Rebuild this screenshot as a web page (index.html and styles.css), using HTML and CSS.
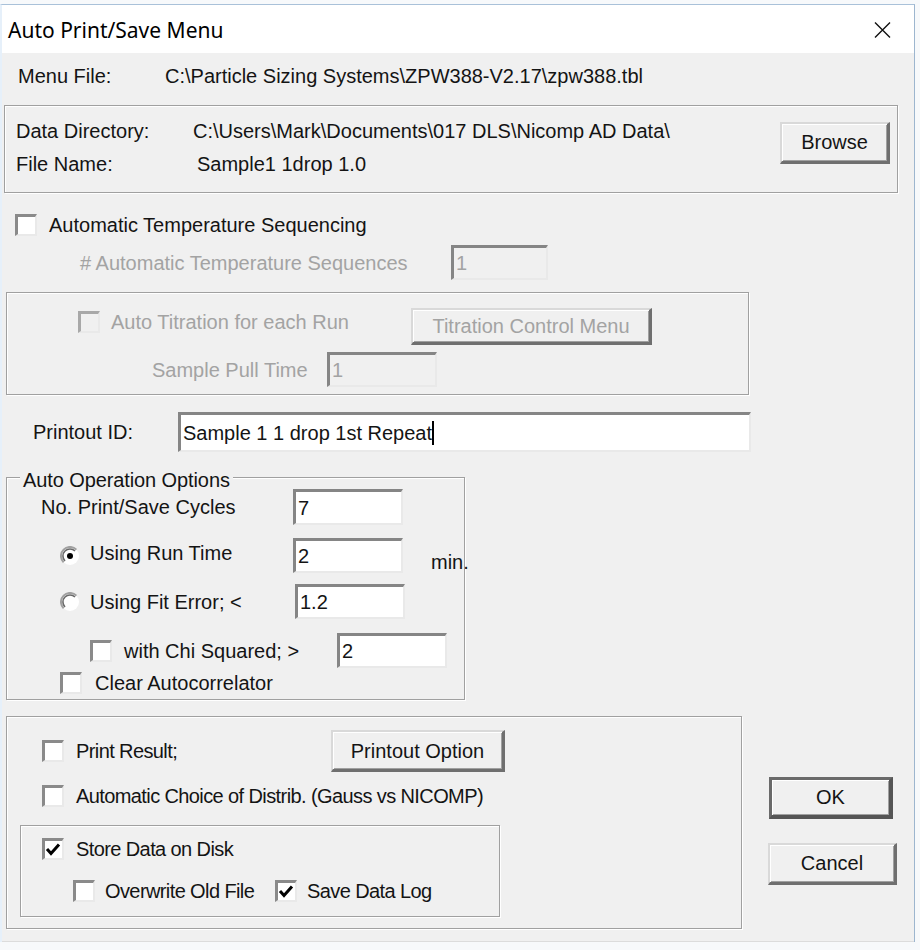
FILE: index.html
```html
<!DOCTYPE html>
<html lang="en">
    <head>
        <meta charset="UTF-8">
        <meta name="viewport" content="width=device-width, initial-scale=1.0">
        <title>Auto Print/Save Menu</title>
        <link rel="stylesheet" href="styles.css">
    </head>
    <body>
        <div class="window">
            <div class="title-bar">
                <span class="title">Auto Print/Save Menu</span>
                <svg class="close" width="17" height="16" viewBox="0 0 17 16">
                    <path d="M1 0.5 L16 15.5 M16 0.5 L1 15.5" stroke="#111" stroke-width="1.4" fill="none" />
                </svg>
            </div>

            <div class="client">
                <div class="row menu-row">
                    <span class="menu-label">Menu File:</span>
                    <span>C:\Particle Sizing Systems\ZPW388-V2.17\zpw388.tbl</span>
                </div>

                <div class="group data-group">
                    <div class="data-rows">
                        <div class="row">
                            <span class="data-label">Data Directory:</span>
                            <span>C:\Users\Mark\Documents\017 DLS\Nicomp AD Data\</span>
                        </div>
                        <div class="row">
                            <span class="data-label">File Name:</span>
                            <span class="file-value">Sample1 1drop 1.0</span>
                        </div>
                    </div>
                    <button class="btn browse-btn">Browse</button>
                </div>

                <div class="row temp-row">
                    <span class="check"></span>
                    <span class="check-label">Automatic Temperature Sequencing</span>
                </div>

                <div class="row seq-row disabled">
                    <span class="seq-label"># Automatic Temperature Sequences</span>
                    <div class="edit edit-off seq-edit">1</div>
                </div>

                <div class="group titration-group disabled">
                    <div class="titration-row">
                        <span class="check check-off titration-check"></span>
                        <span class="titration-label">Auto Titration for each Run</span>
                        <button class="btn titration-btn">Titration Control Menu</button>
                    </div>
                    <div class="row pull-row">
                        <span class="pull-label">Sample Pull Time</span>
                        <div class="edit edit-off pull-edit">1</div>
                    </div>
                </div>

                <div class="row printout-row">
                    <span class="printout-label">Printout ID:</span>
                    <div class="edit printout-edit">Sample 1 1 drop 1st Repeat<span class="caret"></span></div>
                </div>

                <div class="group options-group">
                    <span class="legend">Auto Operation Options</span>

                    <div class="row cycles-row">
                        <span class="cycles-label">No. Print/Save Cycles</span>
                        <div class="edit small-edit">7</div>
                    </div>

                    <div class="row runtime-row">
                        <svg class="radio" width="20" height="20" viewBox="0 0 20 20">
                            <circle cx="10" cy="10" r="9" fill="#fff" />
                            <path d="M3.6 16.4 A9 9 0 0 1 16.4 3.6" stroke="#a0a0a0" stroke-width="2" fill="none" />
                            <path d="M5 15 A7 7 0 0 1 15 5" stroke="#6a6a6a" stroke-width="1.6" fill="none" />
                            <circle cx="10" cy="10" r="3" fill="#000" />
                        </svg>
                        <span class="radio-label runtime-label">Using Run Time</span>
                        <div class="edit small-edit">2</div>
                        <span class="unit">min.</span>
                    </div>

                    <div class="row fit-row">
                        <svg class="radio" width="20" height="20" viewBox="0 0 20 20">
                            <circle cx="10" cy="10" r="9" fill="#fff" />
                            <path d="M3.6 16.4 A9 9 0 0 1 16.4 3.6" stroke="#a0a0a0" stroke-width="2" fill="none" />
                            <path d="M5 15 A7 7 0 0 1 15 5" stroke="#6a6a6a" stroke-width="1.6" fill="none" />
                        </svg>
                        <span class="radio-label fit-label">Using Fit Error; &lt;</span>
                        <div class="edit small-edit">1.2</div>
                    </div>

                    <div class="row chi-row">
                        <span class="check"></span>
                        <span class="chi-label">with Chi Squared; &gt;</span>
                        <div class="edit small-edit">2</div>
                    </div>

                    <div class="row clear-row">
                        <span class="check"></span>
                        <span class="clear-label">Clear Autocorrelator</span>
                    </div>
                </div>

                <div class="bottom">
                    <div class="group output-group">
                        <div class="row print-row">
                            <span class="check"></span>
                            <span class="print-label narrow">Print Result;</span>
                            <button class="btn printout-btn">Printout Option</button>
                        </div>
                        <div class="row distrib-row">
                            <span class="check"></span>
                            <span class="check-label narrow">Automatic Choice of Distrib. (Gauss vs NICOMP)</span>
                        </div>

                        <div class="group disk-group">
                            <div class="row store-row">
                                <span class="check checked">
                                    <svg width="17" height="17" viewBox="0 0 17 17"><polyline points="2,8 6,12.5 14,3.5" stroke="#000" stroke-width="3" fill="none" /></svg>
                                </span>
                                <span class="check-label narrow">Store Data on Disk</span>
                            </div>
                            <div class="row overwrite-row">
                                <span class="check"></span>
                                <span class="overwrite-label narrow">Overwrite Old File</span>
                                <span class="check checked">
                                    <svg width="17" height="17" viewBox="0 0 17 17"><polyline points="2,8 6,12.5 14,3.5" stroke="#000" stroke-width="3" fill="none" /></svg>
                                </span>
                                <span class="log-label narrow">Save Data Log</span>
                            </div>
                        </div>
                    </div>

                    <div class="dialog-buttons">
                        <button class="btn btn-default ok-btn">OK</button>
                        <button class="btn cancel-btn">Cancel</button>
                    </div>
                </div>
            </div>
        </div>
    </body>
</html>
```

FILE: styles.css
```css
* {
    box-sizing: border-box;
}

body {
    margin: 0;
    padding: 0;
    background-color: #f7f9fb;
    font-family: "Liberation Sans", Arial, sans-serif;
    font-size: 20px;
    color: #141414;
}

.window {
    margin-top: 4px;
    width: 915px;
    border-top: 1px solid #a9c1d9;
    border-right: 1px solid #9db6cf;
    border-left: 2px solid #e6f0fa;
    background-color: #fff;
}

.title-bar {
    height: 48px;
    display: flex;
    align-items: center;
    justify-content: space-between;
    padding: 0 23px 0 6px;
    background-color: #fff;
}

.title {
    font-family: "Noto Sans", "Open Sans", sans-serif;
    font-size: 21px;
    color: #000;
    margin-top: 1px;
}

.close {
    display: block;
    margin-top: 2px;
}

.client {
    height: 889px;
    background-color: #f0f0f0;
    border-bottom: 1px solid #dcdcdc;
    overflow: hidden;
}

.row {
    display: flex;
    align-items: center;
    line-height: 26px;
    white-space: nowrap;
}

.row > span {
    flex: none;
}

.narrow {
    letter-spacing: -0.6px;
}

.disabled {
    color: #a3a3a3;
}

/* etched group frame */
.group {
    position: relative;
    border: 1px solid #a0a0a0;
    box-shadow: inset 1px 1px 0 #fff, 1px 1px 0 #fff;
}

.legend {
    position: absolute;
    top: -11px;
    left: 13px;
    padding: 0 3px;
    line-height: 26px;
    background-color: #f0f0f0;
    white-space: nowrap;
    letter-spacing: -0.1px;
}

/* sunken edit box */
.edit {
    display: flex;
    align-items: center;
    padding-left: 2px;
    background-color: #fff;
    border-style: solid;
    border-width: 3px 2px 2px 3px;
    border-color: #858585 #e9e9e9 #e9e9e9 #858585;
    white-space: nowrap;
    flex: none;
}

.edit-off {
    background-color: #f0f0f0;
    color: #a3a3a3;
}

.caret {
    display: inline-block;
    width: 2px;
    height: 24px;
    background-color: #000;
}

.check {
    display: flex;
    align-items: center;
    justify-content: center;
    width: 22px;
    height: 22px;
    flex: none;
    background-color: #fff;
    border-style: solid;
    border-width: 3px 2px 2px 3px;
    border-color: #8a8a8a #e9e9e9 #e9e9e9 #8a8a8a;
}

.check-off {
    background-color: #f0f0f0;
    border-color: #a8a8a8 #e9e9e9 #e9e9e9 #a8a8a8;
}

.check svg {
    display: block;
    flex: none;
}

.check-label {
    margin-left: 12px;
}

.radio {
    display: block;
    flex: none;
}

/* raised push button */
.btn {
    display: flex;
    align-items: center;
    justify-content: center;
    padding: 0;
    font: inherit;
    color: #141414;
    background-color: #f0f0f0;
    border-style: solid;
    border-width: 2px 3px 3px 2px;
    border-color: #d9d9d9 #6f6f6f #6f6f6f #d9d9d9;
    box-shadow: inset 1px 1px 0 #fff, inset -1px -1px 0 #a0a0a0;
    flex: none;
}

.disabled .btn {
    color: #a3a3a3;
}

.btn-default {
    border-width: 3px 4px 4px 3px;
    border-color: #6a6a6a #555 #555 #6a6a6a;
    box-shadow: inset 1px 1px 0 #fff, inset -1px -1px 0 #a0a0a0;
}

/* menu file line */
.menu-row {
    height: 26px;
    margin-top: 10px;
    padding-left: 16px;
}

.menu-label {
    width: 147px;
}

/* data directory frame */
.data-group {
    display: flex;
    align-items: flex-start;
    justify-content: space-between;
    width: 894px;
    height: 88px;
    margin: 16px 0 0 2px;
    padding: 12px 7px 0 11px;
}

.data-rows {
    display: flex;
    flex-direction: column;
    gap: 7px;
}

.data-label {
    width: 177px;
}

.file-value {
    padding-left: 4px;
}

.browse-btn {
    width: 110px;
    height: 42px;
    margin-top: 4px;
}

/* temperature sequencing */
.temp-row {
    height: 26px;
    margin-top: 19px;
    padding-left: 13px;
}

.seq-row {
    height: 35px;
    margin-top: 7px;
    padding-left: 78px;
}

.seq-label {
    width: 371px;
}

.seq-edit {
    width: 97px;
    height: 35px;
}

/* titration frame */
.titration-group {
    width: 743px;
    height: 103px;
    margin: 12px 0 0 4px;
    padding-top: 15px;
}

.titration-row {
    display: flex;
    align-items: flex-start;
    height: 37px;
    line-height: 26px;
    white-space: nowrap;
}

.titration-check {
    margin: 3px 0 0 71px;
}

.titration-label {
    width: 300px;
    margin: 1px 0 0 11px;
}

.titration-btn {
    width: 241px;
    height: 37px;
}

.pull-row {
    height: 35px;
    margin-top: 7px;
    padding-left: 145px;
}

.pull-label {
    width: 175px;
}

.pull-edit {
    width: 110px;
    height: 35px;
}

/* printout id */
.printout-row {
    height: 40px;
    margin-top: 17px;
    padding-left: 31px;
}

.printout-label {
    width: 145px;
}

.printout-edit {
    width: 573px;
    height: 40px;
}

/* auto operation options */
.options-group {
    width: 459px;
    height: 223px;
    margin: 25px 0 0 4px;
    padding-top: 11px;
}

.small-edit {
    width: 110px;
    height: 35px;
}

.cycles-row {
    height: 36px;
    padding-left: 34px;
}

.cycles-row .small-edit {
    height: 36px;
}

.cycles-label {
    width: 252px;
}

.runtime-row {
    height: 35px;
    margin-top: 13px;
    padding-left: 53px;
}

.radio-label {
    margin-left: 10px;
}

.runtime-label {
    width: 203px;
    margin-bottom: 6px;
}

.unit {
    margin: 12px 0 0 28px;
}

.fit-row {
    height: 35px;
    margin-top: 11px;
    padding-left: 53px;
}

.fit-label {
    width: 205px;
}

.chi-row {
    height: 35px;
    margin-top: 14px;
    padding-left: 83px;
}

.chi-label {
    width: 213px;
    margin-left: 12px;
}

.clear-row {
    height: 22px;
    margin-top: 4px;
    padding-left: 53px;
}

.clear-label {
    margin-left: 13px;
}

/* output frame and dialog buttons */
.bottom {
    display: flex;
    align-items: flex-start;
    margin: 16px 0 0 4px;
}

.output-group {
    width: 736px;
    height: 213px;
    padding: 13px 0 0 35px;
}

.print-row {
    height: 42px;
}

.print-label {
    width: 255px;
    margin-left: 12px;
}

.printout-btn {
    width: 174px;
    height: 42px;
}

.distrib-row {
    height: 22px;
    margin-top: 13px;
}

.disk-group {
    width: 480px;
    height: 92px;
    margin: 18px 0 0 -22px;
    padding: 12px 0 0 21px;
}

.store-row {
    height: 22px;
}

.overwrite-row {
    height: 22px;
    margin-top: 20px;
    padding-left: 31px;
}

.overwrite-label {
    width: 170px;
    margin-left: 10px;
}

.log-label {
    margin-left: 10px;
}

.dialog-buttons {
    display: flex;
    flex-direction: column;
    align-items: flex-start;
    margin-left: 27px;
}

.ok-btn {
    width: 124px;
    height: 42px;
    margin-top: 61px;
}

.cancel-btn {
    width: 129px;
    height: 42px;
    margin: 24px 0 0 -1px;
}
```
